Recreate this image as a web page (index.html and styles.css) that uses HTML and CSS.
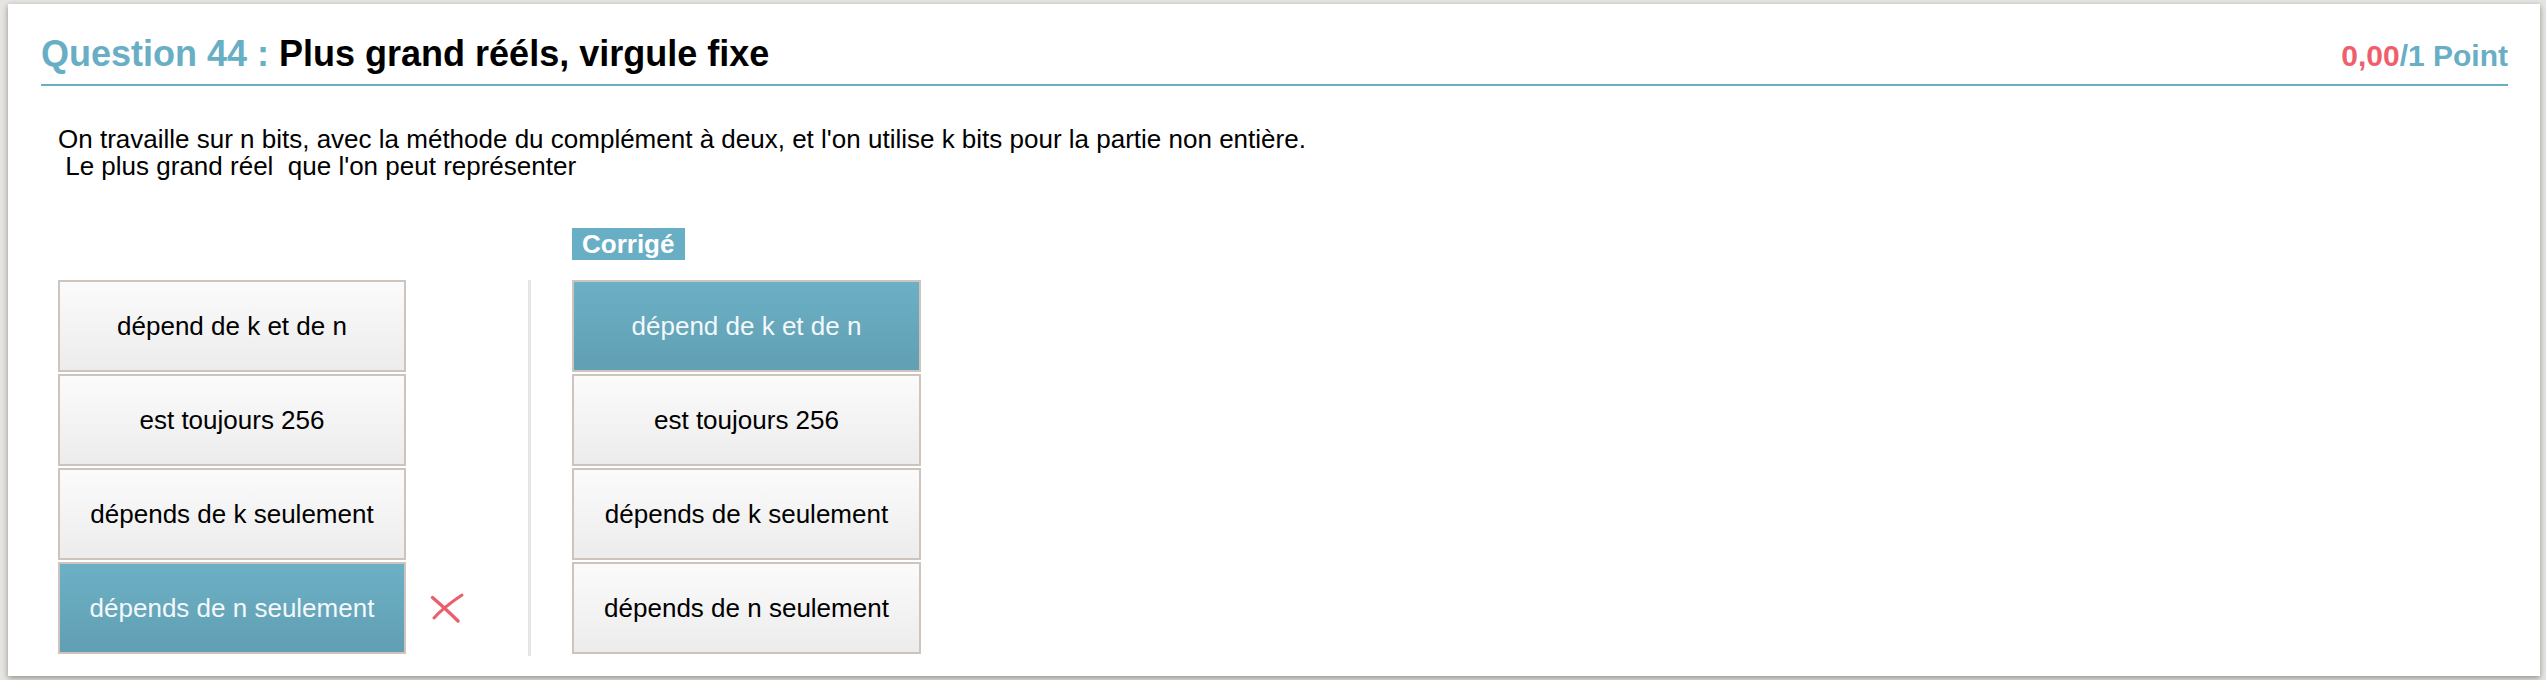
FILE: index.html
```html
<!DOCTYPE html>
<html lang="fr">
<head>
<meta charset="utf-8">
<title>Question 44</title>
<link rel="stylesheet" href="styles.css">
</head>
<body>
<div class="card">
  <div class="q-head">
    <h2 class="q-title"><span class="q-num">Question 44 : </span>Plus grand rééls, virgule fixe</h2>
    <div class="q-score"><span class="q-got">0,00</span>/1 Point</div>
  </div>
  <div class="q-body">
    <p class="q-text">On travaille sur n bits, avec la méthode du complément à deux, et l'on utilise k bits pour la partie non entière.<br>&nbsp;Le plus grand réel&nbsp; que l'on peut représenter</p>
    <div class="answers">
      <div class="cell-empty"></div>
      <div class="corr-head"><span class="corr-label">Corrigé</span></div>
      <div class="col-user">
        <div class="ans-row"><div class="choice">dépend de k et de n</div></div>
        <div class="ans-row"><div class="choice">est toujours 256</div></div>
        <div class="ans-row"><div class="choice">dépends de k seulement</div></div>
        <div class="ans-row"><div class="choice selected">dépends de n seulement</div>
          <svg class="wrong" width="34" height="30" viewBox="0 0 34 30" aria-hidden="true">
            <path d="M2.5 4.5 C 10 11, 19 19, 28 28" fill="none" stroke="#ea5f6b" stroke-width="3.4" stroke-linecap="round"/>
            <path d="M32 2 C 23 8, 12 16, 4 25" fill="none" stroke="#ea5f6b" stroke-width="3" stroke-linecap="round"/>
          </svg>
        </div>
      </div>
      <div class="col-corr">
        <div class="choice selected">dépend de k et de n</div>
        <div class="choice">est toujours 256</div>
        <div class="choice">dépends de k seulement</div>
        <div class="choice">dépends de n seulement</div>
      </div>
    </div>
  </div>
</div>
</body>
</html>
```

FILE: styles.css
```css
html, body {
  margin: 0;
  padding: 0;
}

body {
  background: #e7e5e1;
  padding: 4px 6px 4px 8px;
  height: 680px;
  box-sizing: border-box;
  overflow: hidden;
  font-family: "Liberation Sans", Arial, Helvetica, sans-serif;
  color: #000;
}

.card {
  background: #fff;
  box-shadow: 0 2px 6px rgba(0, 0, 0, 0.38);
  padding: 29px 32px 20px 33px;
}

.q-head {
  display: flex;
  justify-content: space-between;
  align-items: baseline;
  padding-bottom: 10px;
  border-bottom: 2px solid #68afc4;
}

.q-title {
  margin: 0;
  font-size: 36px;
  line-height: 41px;
  font-weight: bold;
  color: #000;
}

.q-num {
  color: #68aec4;
}

.q-score {
  font-size: 30px;
  font-weight: bold;
  color: #68aec4;
}

.q-got {
  color: #ee5f6b;
}

.q-body {
  padding-left: 17px;
}

.q-text {
  margin: 40px 0 0 0;
  font-size: 26px;
  line-height: 27px;
}

.answers {
  display: grid;
  grid-template-columns: 470px auto;
  margin-top: 48px;
}

.corr-head {
  margin-bottom: 20px;
  padding-left: 44px;
}

.corr-label {
  display: inline-block;
  height: 32px;
  line-height: 32px;
  padding: 0 11px 0 10px;
  background: #68aec4;
  color: #fff;
  font-size: 26px;
  font-weight: bold;
}

.ans-row {
  display: flex;
  align-items: center;
}

.choice {
  width: 348px;
  height: 92px;
  box-sizing: border-box;
  margin-bottom: 2px;
  border: 2px solid #cdc4bd;
  background: linear-gradient(to bottom, #fbfbfb, #ececec);
  display: flex;
  align-items: center;
  justify-content: center;
  font-size: 26px;
  color: #000;
}

.choice.selected {
  background: linear-gradient(to bottom, #6cb0c5, #619fb3);
  color: #f3f8fa;
}

.wrong {
  margin-left: 24px;
  margin-bottom: 2px;
}

.col-corr {
  border-left: 3px solid #e5e5e5;
  padding-left: 41px;
}

.col-corr .choice {
  width: 349px;
}
```
